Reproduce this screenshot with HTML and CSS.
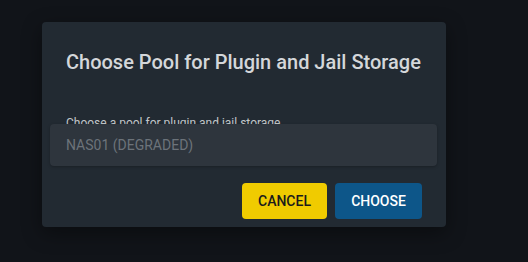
FILE: index.html
```html
<!DOCTYPE html>
<html lang="en">
<head>
<meta charset="utf-8">
<title>Choose Pool</title>
<link rel="stylesheet" href="styles.css">
</head>
<body>
<div class="dialog">
  <h2 class="dialog-title">Choose Pool for Plugin and Jail Storage</h2>
  <div class="dialog-content">
    <div class="field-label">Choose a pool for plugin and jail storage</div>
    <div class="select">NAS01 (DEGRADED)</div>
  </div>
  <div class="dialog-actions">
    <button class="btn btn-cancel">CANCEL</button>
    <button class="btn btn-choose">CHOOSE</button>
  </div>
</div>
</body>
</html>
```
FILE: styles.css
```css
html, body {
  margin: 0;
  padding: 0;
  height: 100%;
}
body {
  background: #111419;
  font-family: Roboto, "Liberation Sans", sans-serif;
  padding: 22px 0 0 42px;
  box-sizing: border-box;
}
.dialog {
  width: 404px;
  box-sizing: border-box;
  background: #222a32;
  border-radius: 4px;
  padding: 24px 24px 8px 24px;
  box-shadow: 0 6px 20px rgba(0,0,0,0.4);
}
.dialog-title {
  margin: 0 0 20px 0;
  font-size: 20px;
  line-height: 32px;
  font-weight: 500;
  color: #d4d7da;
}
.dialog-content {
  display: flex;
  flex-direction: column;
}
.field-label {
  margin-top: 17px;
  font-size: 12px;
  line-height: 16px;
  color: #c3c7ca;
  white-space: nowrap;
}
.select {
  position: relative;
  margin: -7px -15px 0 -16px;
  height: 42px;
  box-sizing: border-box;
  padding: 0 16px;
  display: flex;
  align-items: center;
  background: #2e353d;
  border-radius: 4px;
  font-size: 14px;
  color: #6c737a;
  box-shadow: 0 1px 3px rgba(0,0,0,0.25);
}
.dialog-actions {
  display: flex;
  justify-content: flex-end;
  gap: 8px;
  padding-top: 17px;
}
.btn {
  height: 36px;
  padding: 0 16px;
  border: none;
  border-radius: 4px;
  font-family: Roboto, "Liberation Sans", sans-serif;
  font-size: 14px;
  font-weight: 500;
  letter-spacing: 0;
  cursor: pointer;
}
.btn-cancel {
  background: #f0cb00;
  color: #1b1b1b;
  min-width: 85px;
}
.btn-choose {
  background: #0d5689;
  color: #ffffff;
  min-width: 87px;
}
```
